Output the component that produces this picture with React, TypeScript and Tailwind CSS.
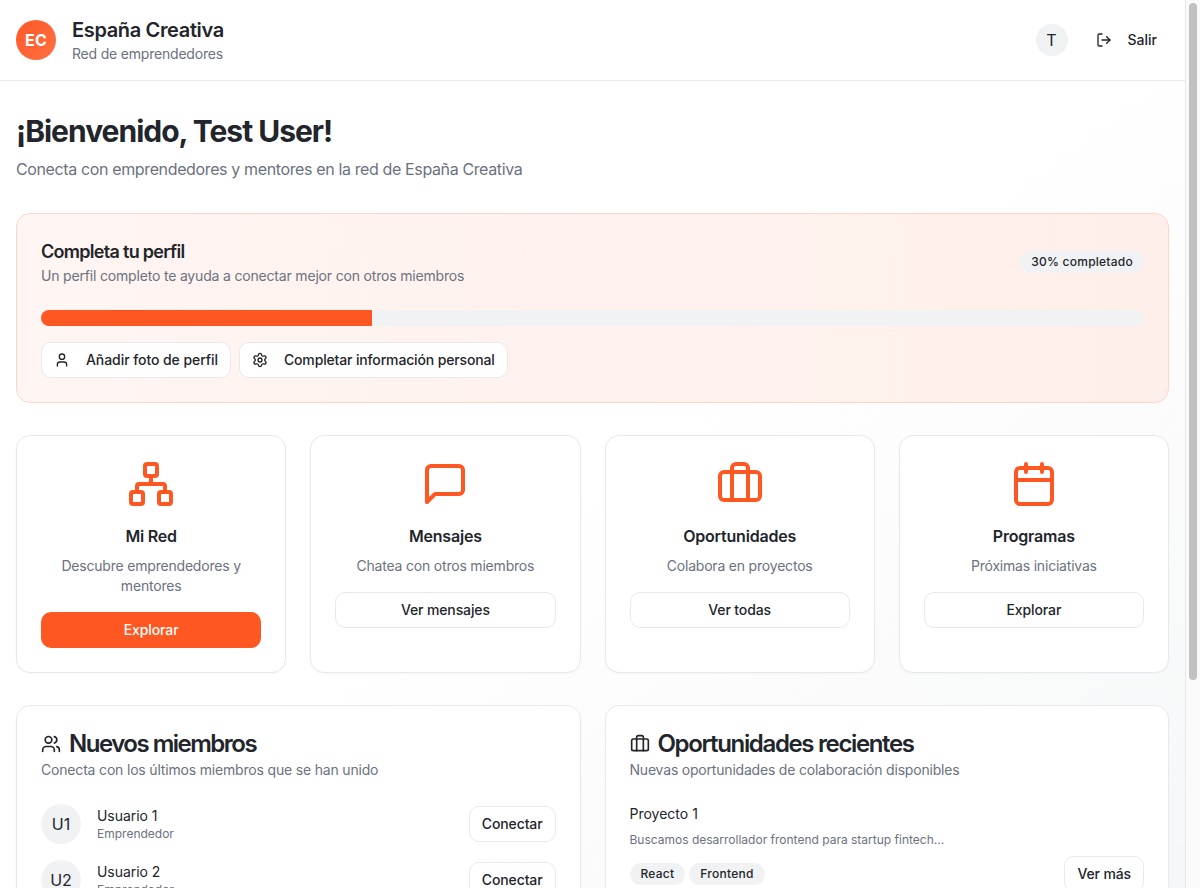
import { Calendar, LogOut, Network, Settings, User, Users } from "lucide-react";

const BriefcaseIcon = ({ className }: { className: string }) => (
  <svg
    className={className}
    viewBox="0 0 24 24"
    fill="none"
    stroke="currentColor"
    strokeWidth="2"
    strokeLinecap="round"
    strokeLinejoin="round"
  >
    <rect width="20" height="14" x="2" y="6" rx="2" ry="2" />
    <path d="M16 20V4a2 2 0 0 0-2-2h-4a2 2 0 0 0-2 2v16" />
  </svg>
);

const ChatIcon = ({ className }: { className: string }) => (
  <svg
    className={className}
    viewBox="0 0 24 24"
    fill="none"
    stroke="currentColor"
    strokeWidth="2"
    strokeLinecap="round"
    strokeLinejoin="round"
  >
    <path d="M21 15a2 2 0 0 1-2 2H7l-4 4V5a2 2 0 0 1 2-2h14a2 2 0 0 1 2 2z" />
  </svg>
);

const outlineBtn =
  "inline-flex h-9 items-center justify-center rounded-[10px] border border-[#e8e9ee] bg-white text-sm font-medium tracking-[-0.12px] text-[#22252b]";

const badge =
  "rounded-full border border-transparent bg-[#f1f2f4] px-2.5 py-0.5 text-xs font-medium leading-4 tracking-[0.25px]";

const actions = [
  {
    title: "Mi Red",
    text: "Descubre emprendedores y mentores",
    cta: "Explorar",
    primary: true,
    icon: <Network className="h-12 w-12 text-[#ff5722]" />,
  },
  {
    title: "Mensajes",
    text: "Chatea con otros miembros",
    cta: "Ver mensajes",
    icon: <ChatIcon className="h-12 w-12 text-[#ff5722]" />,
  },
  {
    title: "Oportunidades",
    text: "Colabora en proyectos",
    cta: "Ver todas",
    icon: <BriefcaseIcon className="h-12 w-12 text-[#ff5722]" />,
  },
  {
    title: "Programas",
    text: "Próximas iniciativas",
    cta: "Explorar",
    icon: <Calendar className="h-12 w-12 text-[#ff5722]" />,
  },
];

const members = ["1", "2"];

const App = () => {
  return (
    <div className="flex h-[888px] overflow-hidden bg-white font-['Inter',sans-serif] text-[#22252b]">
      <div className="h-full w-[1185px] shrink-0 overflow-hidden bg-gradient-to-br from-white via-white to-[#f6f7f8]">
        {/* Header */}
        <header className="flex h-[81px] items-center justify-between border-b border-[#e8e9ee] bg-white px-4">
          <div className="flex items-center gap-4">
            <div className="flex h-10 w-10 items-center justify-center rounded-full bg-gradient-to-br from-[#ff5722] to-[#ff7043] font-bold tracking-[0.3px] text-white">
              EC
            </div>
            <div>
              <h1 className="text-xl font-semibold leading-7 tracking-[-0.35px]">España Creativa</h1>
              <p className="text-sm leading-5 tracking-[-0.2px] text-[#6b7280]">Red de emprendedores</p>
            </div>
          </div>
          <div className="flex items-center gap-4">
            <div className="flex h-8 w-8 items-center justify-center rounded-full bg-[#f1f2f4] text-base">
              T
            </div>
            <div className="flex h-9 items-center gap-4 px-3 text-sm font-medium">
              <LogOut className="h-4 w-4" />
              Salir
            </div>
          </div>
        </header>

        <main className="px-4 pt-8">
          <h2 className="text-3xl font-bold leading-9 tracking-[-1px]">¡Bienvenido, Test User!</h2>
          <p className="mt-2 text-base leading-6 tracking-[-0.37px] text-[#6b7280]">
            Conecta con emprendedores y mentores en la red de España Creativa
          </p>

          {/* Profile completion */}
          <section className="mt-8 rounded-[14px] border border-[#ffd5ca] bg-gradient-to-r from-[#fff5f2] to-[#ffefea] p-6">
            <div className="flex items-center justify-between">
              <div>
                <h3 className="text-lg font-semibold leading-7 tracking-[-0.7px]">Completa tu perfil</h3>
                <p className="text-sm leading-5 tracking-[-0.18px] text-[#6b7280]">
                  Un perfil completo te ayuda a conectar mejor con otros miembros
                </p>
              </div>
              <span className={badge}>30% completado</span>
            </div>
            <div className="mt-6 h-4 overflow-hidden rounded-full bg-[#f1f2f4]">
              <div className="h-full bg-[#ff5722]" style={{ width: "30%" }} />
            </div>
            <div className="mt-4 flex gap-2">
              <div className={`${outlineBtn} gap-4 px-3`}>
                <User className="h-4 w-4" />
                <span className="tracking-[-0.07px]">Añadir foto de perfil</span>
              </div>
              <div className={`${outlineBtn} gap-4 px-3`}>
                <Settings className="h-4 w-4" />
                <span className="tracking-[-0.15px]">Completar información personal</span>
              </div>
            </div>
          </section>

          {/* Quick actions */}
          <section className="mt-8 grid grid-cols-4 gap-6">
            {actions.map((a) => (
              <div
                key={a.title}
                className="flex flex-col items-center rounded-[14px] border border-[#e8e9ee] bg-white p-6 text-center shadow-[0_1px_2px_rgba(0,0,0,0.03)]"
              >
                <div className="mb-4">{a.icon}</div>
                <h3 className="mb-2 text-base font-semibold leading-6 tracking-[-0.2px]">{a.title}</h3>
                <p className="mb-4 text-sm leading-5 tracking-[-0.2px] text-[#6b7280]">{a.text}</p>
                {a.primary ? (
                  <div className="flex h-9 w-full items-center justify-center rounded-[10px] bg-[#ff5722] text-sm font-medium tracking-[-0.12px] text-white">
                    {a.cta}
                  </div>
                ) : (
                  <div className={`${outlineBtn} w-full`}>{a.cta}</div>
                )}
              </div>
            ))}
          </section>

          {/* Recent activity */}
          <section className="mt-8 grid grid-cols-2 gap-6">
            <div className="rounded-[14px] border border-[#e8e9ee] bg-white p-6 shadow-[0_1px_2px_rgba(0,0,0,0.03)]">
              <h3 className="flex items-center gap-2 text-2xl font-semibold leading-7 tracking-[-1.5px]">
                <Users className="h-5 w-5" />
                Nuevos miembros
              </h3>
              <p className="mt-0.5 text-sm leading-5 tracking-[-0.18px] text-[#6b7280]">
                Conecta con los últimos miembros que se han unido
              </p>
              <div className="mt-6 flex flex-col gap-4">
                {members.map((n) => (
                  <div key={n} className="flex items-center justify-between">
                    <div className="flex items-center gap-4">
                      <div className="flex h-10 w-10 items-center justify-center rounded-full bg-[#f1f2f4] text-base">
                        U{n}
                      </div>
                      <div>
                        <p className="text-sm leading-5 tracking-[-0.05px]">Usuario {n}</p>
                        <p className="text-xs leading-4 text-[#6b7280]">Emprendedor</p>
                      </div>
                    </div>
                    <div className={`${outlineBtn} px-3`}>Conectar</div>
                  </div>
                ))}
              </div>
            </div>

            <div className="rounded-[14px] border border-[#e8e9ee] bg-white p-6 shadow-[0_1px_2px_rgba(0,0,0,0.03)]">
              <h3 className="flex items-center gap-2 text-2xl font-semibold leading-7 tracking-[-1.35px]">
                <BriefcaseIcon className="h-5 w-5" />
                Oportunidades recientes
              </h3>
              <p className="mt-0.5 text-sm leading-5 tracking-[-0.2px] text-[#6b7280]">
                Nuevas oportunidades de colaboración disponibles
              </p>
              <div className="mt-6">
                <p className="text-sm leading-5">Proyecto 1</p>
                <p className="mt-2 text-xs leading-4 text-[#6b7280]">
                  Buscamos desarrollador frontend para startup fintech...
                </p>
                <div className="mt-2 flex items-center justify-between">
                  <div className="flex gap-1">
                    <span className={badge}>React</span>
                    <span className={badge}>Frontend</span>
                  </div>
                  <div className={`${outlineBtn} px-3`}>Ver más</div>
                </div>
              </div>
            </div>
          </section>
        </main>
      </div>

      {/* Scrollbar */}
      <div className="h-full w-[15px] shrink-0 border-l border-[#e8e8e8] bg-[#fafafa] pl-[3px] pt-[3px]">
        <div className="h-[677px] w-2 rounded-full bg-[#c1c1c1]" />
      </div>
    </div>
  );
};

export default App;
